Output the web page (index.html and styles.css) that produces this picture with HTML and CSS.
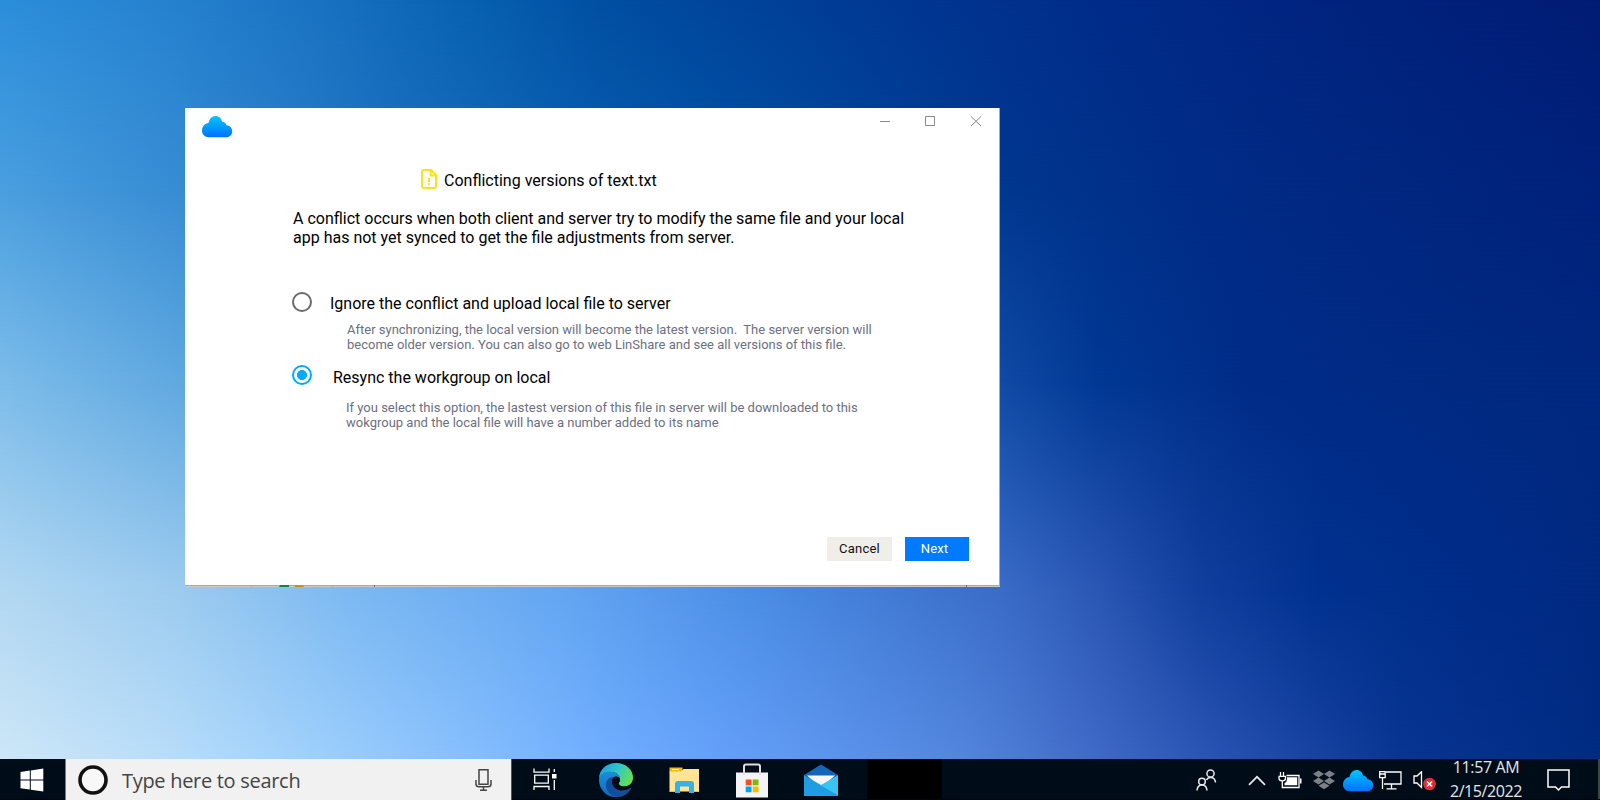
FILE: index.html
```html
<!DOCTYPE html>
<html lang="en">
<head>
<meta charset="utf-8">
<title>Conflicting versions</title>
<link rel="stylesheet" href="styles.css">
</head>
<body>
<div class="screen">
  <div class="wall wall-1"></div><div class="wall wall-2"></div><div class="wall wall-3"></div><div class="wall wall-4"></div><div class="wall wall-5"></div>

  <main class="desktop">
    <section class="window">
      <header class="titlebar">
        <svg class="cloud" width="31" height="22" viewBox="0 0 31 22">
          <defs><linearGradient id="cloud" x1="0" y1="0" x2="0" y2="1"><stop offset="0" stop-color="#00c6ff"/><stop offset="1" stop-color="#0072ff"/></linearGradient></defs>
          <path fill="url(#cloud)" d="M6.700 21.200C2.700 21.200 0 18.300 0 14.500 0 10.500 2.700 7.300 6.500 6.900 7.300 3 9.900 0 13.500 0c3.500 0 5.800 2.200 6.600 5.600 2.300.5 3.600 1.800 4.300 3.600 3.300.1 5.800 2.600 5.800 6 0 3.500-2.500 6-5.800 6z"/>
        </svg>
        <svg class="controls" width="103" height="12" viewBox="0 0 103 12" fill="none" stroke="#8a8a8a">
          <path d="M0 5.500h10M45.500.5h9v9h-9zM91 .5l10 9.500M101 .5l-10 9.500"/>
        </svg>
      </header>

      <div class="content">
        <h1 class="title">
          <svg width="16" height="20" viewBox="0 0 16 20" fill="none" stroke="#ffe11b" stroke-width="2">
            <path d="M3 1h7l5 5v11q0 2-2 2H3q-2 0-2-2V3q0-2 2-2z" stroke-linejoin="round"/><path d="M9.700 1v5.500H15M8 9v4M8 14.200v2"/>
          </svg>
          <span>Conflicting versions of text.txt</span>
        </h1>
        <p class="lead">A conflict occurs when both client and server try to modify the same file and your local<br>app has not yet synced to get the file adjustments from server.</p>

        <div class="option">
          <span class="radio"></span>
          <span class="option-label">Ignore the conflict and upload local file to server</span>
        </div>
        <p class="hint hint-first">After synchronizing, the local version will become the latest version.&nbsp; The server version will<br>become older version. You can also go to web LinShare and see all versions of this file.</p>
        <div class="option option-second">
          <span class="radio radio-on"></span>
          <span class="option-label">Resync the workgroup on local</span>
        </div>
        <p class="hint hint-second">If you select this option, the lastest version of this file in server will be downloaded to this<br>wokgroup and the local file will have a number added to its name</p>
      </div>

      <footer class="actions">
        <button class="btn">Cancel</button>
        <button class="btn btn-primary">Next</button>
      </footer>
      <svg class="edge" width="815" height="2" viewBox="0 0 815 2">
        <path fill="#cbc9c5" d="M0 0h815v2H0z"/><path fill="#a9a9a9" d="M0 0h815v1H0z"/><path fill="#0b8a3c" d="M95 0h9v2h-10z"/><path fill="#c99400" d="M109 0h9l1 2h-9z"/><path fill="#777" d="M189 0h1v2h-1zM781 0h1v2h-1z"/><path fill="#aaa" d="M66 0h1v2h-1zM147 0h1v2h-1z"/>
      </svg>
    </section>
  </main>

  <nav class="taskbar">
    <div class="start">
      <svg width="24" height="24" viewBox="0 0 24 24" fill="#fff"><path d="M.5 4l9.300-1.400v9H.5zM10.800 2.500L23.300.6v11H10.800zM.5 12.600h9.300v9L.5 20.200zM10.800 12.600h12.500V23.500l-12.500-1.800z"/></svg>
    </div>
    <div class="search">
      <svg class="cortana" width="32" height="32" viewBox="0 0 32 32"><circle cx="16" cy="16" r="13" fill="#f8f8f8" stroke="#111" stroke-width="3.600"/></svg>
      <span class="search-text">Type here to search</span>
      <svg class="mic" width="17" height="24" viewBox="0 0 17 24" fill="none" stroke="#444" stroke-width="1.500"><path d="M4 1.800h9v14.500H4zM1 12v4q0 2.800 3 2.800h9q3 0 3-2.800v-4M8.500 19v3M5 22.300h7"/></svg>
    </div>
    <div class="apps">
      <svg class="taskview" width="24" height="23" viewBox="0 0 24 23" fill="none" stroke="#fff" stroke-width="1.300"><path d="M1 .5v3.700h15V.5M1 22v-3.500h15V22M1.700 7.200h13.600v8H1.700zM21.300 1v3M21.300 12v10"/><path fill="#fff" stroke="none" d="M19 6h4.500v4.500H19z"/></svg>
      <svg class="edge-logo" width="36" height="36" viewBox="0 0 36 36">
        <defs>
          <linearGradient id="e1" x1="0" y1=".2" x2="1" y2=".6"><stop offset="0" stop-color="#1b9de2"/><stop offset=".5" stop-color="#31c6c8"/><stop offset="1" stop-color="#68e14c"/></linearGradient>
          <linearGradient id="e2" x1="0" y1="0" x2="0" y2="1"><stop offset="0" stop-color="#1b8fd8"/><stop offset="1" stop-color="#1168be"/></linearGradient>
        </defs>
        <path fill="url(#e1)" d="M1 17C1 7.500 8.500 1 18 1c10 0 17 7 17 14.500 0 5.500-4 9-8.500 9-4 0-5.800-1.700-5.800-3 0-1 1.300-1.500 1.300-4C22 13 18 10 13 10 6 10 1.500 14 1 17z"/>
        <path fill="url(#e2)" d="M1 18C1 12.500 6 9.500 11.500 9.500c5.500 0 10 3 10.500 7-1-1.300-2.500-2-4-2-3 0-5.500 3.500-5.500 7.500 0 6 4 11 10 12-1.500.6-3 1-5 1C8.500 35 1 27.500 1 18z"/>
        <path fill="#124e9b" d="M16 14.800c-2 2-2.500 4-1.800 6.500 1.200 4.500 5.300 7 9.800 7 3.500 0 6-1 8.500-2.500.7-.4 1 .2.500 1C30 32 25 35 20 35c-7 0-12-6-12-12 0-4.500 3-8 8-8.200z"/>
        <path fill="#000c17" d="M17.500 14.500c2-.3 3.800.8 4.500 2.400.2 2.400-1.300 3.400-1.300 4.600 0 1.300 1.800 3 5.800 3 2.600 0 5-1 6.500-2.800l1.500 2c-2.500 3-6.500 4.600-10.500 4.600-4.500 0-8.600-2.500-9.800-7-.7-2.500.6-5.500 3.300-6.800z"/>
      </svg>
      <svg class="folder" width="32" height="28" viewBox="0 0 32 28"><path fill="#eeb91f" d="M1.500 1.500h13v5h-13z"/><path fill="#fff" d="M4 3h7v1H4z"/><path fill="#ffe594" d="M1.500 5.500h11.500l2.500-2.500h15.500v22.500H1.500z"/><path fill="#38b1e8" d="M7 27V18q0-3 3-3h13q3 0 3 3v9h-5v-6.500h-9V27z"/><path fill="#dfc16c" d="M1.500 25h5.500v1H1.500zM26 25h5v1h-5z"/></svg>
      <svg class="store" width="34" height="35" viewBox="0 0 34 35"><path fill="#f4f4f4" d="M1 9.500h32v25H1z"/><path d="M9 12V3.500q0-2 2-2h12q2 0 2 2V12" fill="none" stroke="#dedede" stroke-width="2"/><path fill="#f25022" d="M10.700 16.500h5.800v5.800h-5.800z"/><path fill="#7fba00" d="M17.700 16.500h5.800v5.800h-5.800z"/><path fill="#00a4ef" d="M10.700 23.500h5.800v5.800h-5.800z"/><path fill="#ffb900" d="M17.700 23.500h5.800v5.800h-5.800z"/></svg>
      <svg class="mail" width="34" height="33" viewBox="0 0 34 33"><path fill="#1565b8" d="M0 11L17 .5 34 11v8H0z"/><path fill="#f7f7f7" d="M3 11.500h28L17 24z"/><path fill="#1f9ce4" d="M0 11.200l17 9.800L34 32H0z"/><path fill="#39c5f3" d="M34 11.200L16.500 21.200 34 32z"/></svg>
      <span class="blank"></span>
    </div>
    <div class="tray">
      <svg class="people" width="21" height="22" viewBox="0 0 21 22" fill="none" stroke="#e8e8e8" stroke-width="1.500"><circle cx="14.500" cy="4.500" r="3.600"/><circle cx="6" cy="12.500" r="3.300"/><path d="M1 21.500q.4-5.500 5-5.500t5 5.500M10.500 11q1.200-2.500 4-2.500 4.600 0 5 5"/></svg>
      <svg class="chevron" width="18" height="11" viewBox="0 0 18 11" fill="none" stroke="#e8e8e8" stroke-width="1.700"><path d="M1 9.800l8-8 8 8"/></svg>
      <svg class="battery" width="24" height="17" viewBox="0 0 24 17" fill="none" stroke="#fff" stroke-width="1.300"><path d="M2.500 0v4M5.500 0v4M1 4.300h6.500v2q0 2.500-3.200 2.700Q1 8.800 1 6.300zM4.300 9v6.500H21v-12H8.500"/><path fill="#fff" stroke="none" d="M9 5.300h10.200v8H6.500V11Q9 10 9 7zM22 6.500h1.500v5H22z"/></svg>
      <svg class="dropbox" width="22" height="20" viewBox="0 0 22 20" fill="#7d8187"><path d="M5.500.5L11 4 5.500 7.500 0 4zM16.500.5L22 4l-5.500 3.500L11 4zM5.500 7.500L11 11l-5.500 3.500L0 11zM16.500 7.500L22 11l-5.500 3.500L11 11zM11 12.500l5.500 3.300L11 19.300l-5.500-3.500z"/></svg>
      <svg class="tray-cloud" width="31" height="22" viewBox="0 0 31 22"><path fill="url(#cloud)" d="M6.700 21.200C2.700 21.200 0 18.300 0 14.500 0 10.500 2.700 7.300 6.500 6.900 7.300 3 9.900 0 13.500 0c3.500 0 5.800 2.200 6.600 5.600 2.300.5 3.600 1.800 4.300 3.600 3.300.1 5.800 2.600 5.800 6 0 3.500-2.500 6-5.800 6z"/></svg>
      <svg class="network" width="23" height="19" viewBox="0 0 23 19" fill="none" stroke="#fff" stroke-width="1.300"><path d="M7 1h15v12H5M.7.700h5.500v6H.7zM.7 3h5.500M3.500 7v11M12.500 13v4.500M7.500 17.800h10"/></svg>
      <svg class="volume" width="24" height="20" viewBox="0 0 24 20"><path d="M1 5h3l4.500-4.300V16.500L4 12H1z" fill="none" stroke="#fff" stroke-width="1.300"/><circle cx="16.500" cy="13" r="6.300" fill="#dc2f36"/><path d="M14 10.500l5 5M19 10.500l-5 5" stroke="#fff" stroke-width="1.600"/></svg>
      <div class="clock"><span class="time">11:57 AM</span><span class="date">2/15/2022</span></div>
      <svg class="notice" width="23" height="23" viewBox="0 0 23 23" fill="none" stroke="#fff" stroke-width="1.500"><path d="M1 1h21v17h-7.500L11.500 21l-3-3H1z"/></svg>
      <span class="peek"></span>
    </div>
  </nav>
</div>
</body>
</html>
```
FILE: styles.css
```css
* { box-sizing: border-box; }
body { margin: 0; font-family: Roboto, sans-serif; }
svg { display: block; flex: none; }
.screen { position: relative; width: 1600px; height: 800px; overflow: hidden; display: flex; flex-direction: column; }

/* Wallpaper: five horizontal colour bands faded into one another */
.wall { position: absolute; inset: 0; }
.wall-1 { background: linear-gradient(90deg, #2b8edb 0, #2682d0 160px, #1a72c2 320px, #0860b0 480px, #004fa3 600px, #00459c 720px, #003793 900px, #002c89 1100px, #002581 1280px, #00207a 1440px, #001c75 1600px); }
.wall-2 { background: linear-gradient(90deg, #4a9fdf 0, #378cd3 180px, #1a6fc0 400px, #0055a8 700px, #00378f 1000px, #002c86 1200px, #00217b 1600px);
  mask-image: linear-gradient(180deg, transparent 0, #000 190px); }
.wall-3 { background: linear-gradient(90deg, #7cbcea 0, #5fa8e0 180px, #3a88d4 500px, #0f4aa5 1000px, #003894 1100px, #002c87 1250px, #00287f 1600px);
  mask-image: linear-gradient(180deg, transparent 190px, #000 380px); }
.wall-4 { background: linear-gradient(90deg, #b2d8f2 0, #9ccbef 180px, #7cb9f2 350px, #64a6f2 560px, #4b8ee6 750px, #3a6cc8 1000px, #2a56b4 1100px, #103f9e 1200px, #003190 1320px, #002982 1600px);
  mask-image: linear-gradient(180deg, transparent 380px, #000 590px); }
.wall-5 { background: linear-gradient(90deg, #cde6f7 0, #b9ddf9 160px, #9dcffc 320px, #84bdfd 480px, #70aeff 600px, #64a0fa 720px, #5386dd 960px, #4069c6 1100px, #2852b2 1220px, #083592 1400px, #002b82 1600px);
  mask-image: linear-gradient(180deg, transparent 590px, #000 759px); }

.desktop { position: relative; flex: 1; padding: 108px 0 0 185px; }
.window { width: 815px; height: 479px; display: flex; flex-direction: column; background: #fff; border-right: 1px solid #a9a9a9; }
.titlebar { display: flex; justify-content: space-between; align-items: flex-start; padding: 8px 16px 0 17px; height: 60px; }

.content { padding-left: 107px; flex: 1; }
.title { display: flex; align-items: flex-start; margin: 0 0 0 129px; height: 41px; font-size: 16px; font-weight: 400; line-height: 19px; }
.title svg { margin-top: 1px; }
.title span { margin: 3px 0 0 7px; }
.lead { margin: 0 0 0 1px; font-size: 16px; line-height: 19px; white-space: nowrap; }
.option { display: flex; align-items: flex-start; margin-top: 45px; height: 30px; font-size: 16px; line-height: 19px; }
.option-label { margin: 2px 0 0 18px; }
.radio { width: 20px; height: 20px; border: 2px solid #6b6b6b; border-radius: 50%; flex: none; }
.radio-on { border-color: #00aaff; background: radial-gradient(circle, #00aaff 4.700px, transparent 5.300px); }
.hint { margin: 0 0 0 55px; font-size: 13px; line-height: 15px; color: #6d7081; white-space: nowrap; }
.option-second { margin-top: 13px; height: 35px; }
.option-second .option-label { margin-left: 21px; margin-top: 3px; }
.hint-second { margin-left: 54px; }

.actions { display: flex; justify-content: flex-end; gap: 13px; height: 48px; padding-right: 30px; }
.btn { width: 65px; height: 24px; border: 0; padding: 0 0 1px; background: #f1eeea; color: #111; font: 13px Roboto, sans-serif; letter-spacing: .2px; }
.btn-primary { width: 64px; padding-right: 5px; background: #007aff; color: #fff; }
.edge { margin-right: -1px; }

.taskbar { position: relative; display: flex; height: 41px; background: #000c17; border-bottom: 1px solid #00060c; }
.start { width: 65px; padding: 9px 0 0 20px; }
.search { width: 447px; display: flex; background: #f1f1f1; border-right: 1px solid #555; border-left: 1px solid #777; height: 41px; }
.cortana { margin: 5px 0 0 11px; }
.search-text { margin: 8px 0 0 13px; width: 342px; font: 20px/28px "Open Sans", sans-serif; letter-spacing: -.3px; color: #444; }
.mic { margin: 9px 0 0 11px; }
.apps { display: flex; }
.taskview { margin: 9px 0 0 21px; }
.edge-logo { margin: 3px 0 0 41px; }
.folder { margin: 7px 0 0 34px; }
.store { margin: 4px 0 0 35px; }
.mail { margin: 5px 0 0 35px; }
.blank { width: 75px; margin-left: 29px; background: #000; }
.tray { display: flex; margin-left: auto; }
.people { margin: 10px 31px 0 0; }
.chevron { margin: 16px 12px 0 0; }
.battery { margin: 13px 11px 0 0; }
.dropbox { margin: 11px 8px 0 0; }
.tray-cloud { margin: 11px 5px 0 0; }
.network { margin: 12px 11px 0 0; }
.volume { margin: 12px 11px 0 0; }
.clock { width: 76px; display: flex; flex-direction: column; align-items: center; font: 16px/16px "Open Sans", sans-serif; letter-spacing: -.4px; color: #e4e6e8; white-space: nowrap; margin-right: 23px; }
.date { margin-top: 8px; }
.notice { margin: 10px 28px 0 0; }
.peek { width: 2px; background: #3c444c; }
```
